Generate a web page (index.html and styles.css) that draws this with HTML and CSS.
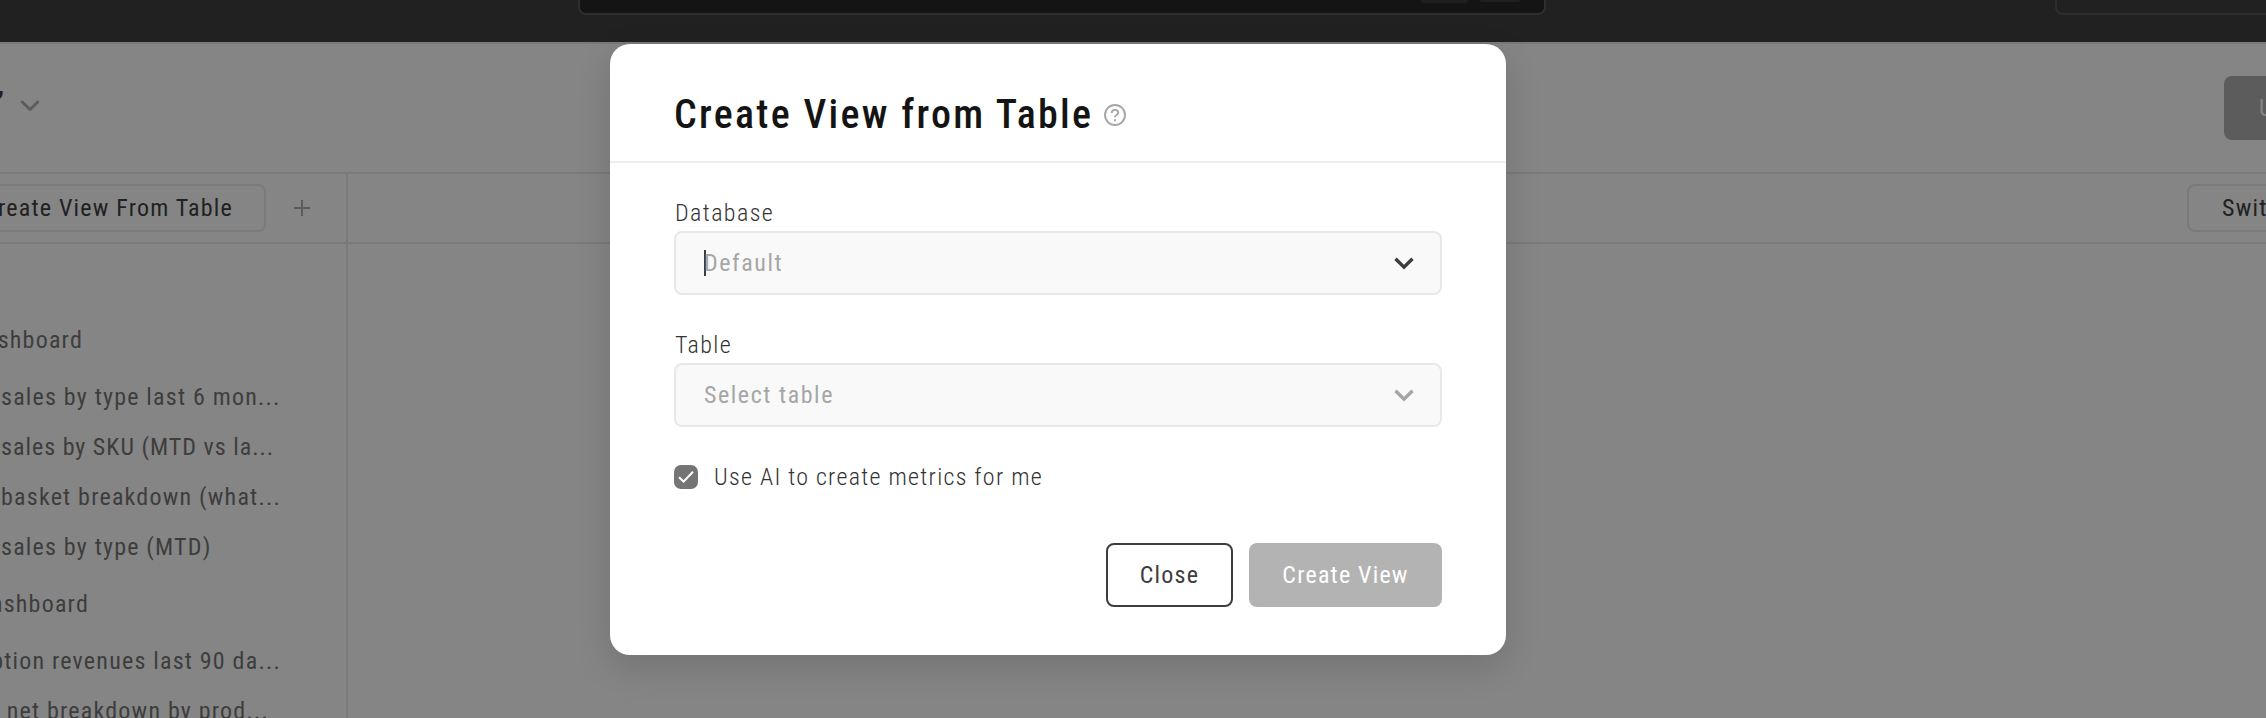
FILE: index.html
```
<!DOCTYPE html>
<html lang="en">
<head>
<meta charset="utf-8">
<title>Create View from Table</title>
<link rel="stylesheet" href="styles.css">
</head>
<body>
<div class="app">
  <div class="topbar">
    <div class="search"><span class="key key-wide"></span><span class="key"></span></div>
    <div class="account"></div>
  </div>
  <header class="header">
    <div class="header-title">
      <span class="title-end">’</span>
      <svg class="title-chevron" width="20" height="12" viewBox="0 0 20 12"><path d="M2.2 2 10 9.6 17.8 2" fill="none" stroke="#5c5c5c" stroke-width="2.8" stroke-linecap="round" stroke-linejoin="round"/></svg>
    </div>
    <div class="update">Update</div>
  </header>
  <div class="main">
    <aside class="sidebar">
      <div class="toolbar">
        <div class="tab">Create View From Table</div>
        <svg class="plus" width="16" height="16" viewBox="0 0 16 16"><path d="M8 0V16M0 8H16" stroke="#5c5c5c" stroke-width="2"/></svg>
      </div>
      <nav class="list">
        <div class="group" style="width:83px">Dashboard</div>
        <div class="item">sales by type last 6 mon...</div>
        <div class="item item-tight">sales by SKU (MTD vs la...</div>
        <div class="item">basket breakdown (what...</div>
        <div class="item">sales by type (MTD)</div>
        <div class="group" style="width:89px">Dashboard</div>
        <div class="item item-end" style="width:281px">ption revenues last 90 da...</div>
        <div class="item item-end" style="width:269px">net breakdown by prod...</div>
      </nav>
    </aside>
    <section class="content">
      <div class="toolbar toolbar-end"><div class="switch">Switch</div></div>
    </section>
  </div>
</div>

<div class="modal">
  <div class="modal-head">
    <h1 class="modal-title">Create View from Table</h1>
    <svg class="help" width="22" height="22" viewBox="0 0 22 22" fill="none" stroke="#a6a6a6" stroke-width="1.9"><circle cx="11" cy="11" r="10"/><path d="M7.8 9V8.8C7.8 7 9.1 5.9 11 5.9S14.2 7 14.2 8.8C14.2 11.1 11 10.9 11 13.2"/><path d="M11 15.2V17.2"/></svg>
  </div>
  <div class="modal-body">
    <label class="label">Database</label>
    <div class="select">
      <span class="caret"></span><span class="placeholder">Default</span>
      <svg class="chevron" width="20" height="13" viewBox="0 0 20 13"><path d="M1.5 1.7 10 10.2 18.5 1.7" fill="none" stroke="#3d3d3d" stroke-width="3.4"/></svg>
    </div>
    <label class="label">Table</label>
    <div class="select">
      <span class="placeholder">Select table</span>
      <svg class="chevron" width="20" height="13" viewBox="0 0 20 13"><path d="M1.5 1.7 10 10.2 18.5 1.7" fill="none" stroke="#a6a6a6" stroke-width="3.4"/></svg>
    </div>
    <div class="check">
      <span class="box"><svg width="24" height="24" viewBox="0 0 24 24"><path d="M5 12.3 9.6 16.6 19 6.8" fill="none" stroke="#fff" stroke-width="2"/></svg></span>
      <span>Use AI to create metrics for me</span>
    </div>
    <div class="actions">
      <div class="btn btn-close">Close</div>
      <div class="btn btn-create">Create View</div>
    </div>
  </div>
</div>
</body>
</html>
```
FILE: styles.css
```
* { box-sizing: border-box; }
body {
  margin: 0;
  width: 2266px;
  height: 718px;
  overflow: hidden;
  position: relative;
  background: #858585;
  font: 400 24px/30px "Roboto Condensed", Roboto, sans-serif;
  letter-spacing: 1.2px;
  white-space: nowrap;
}
.app { display: flex; flex-direction: column; height: 718px; overflow: hidden; }
.topbar {
  flex: none;
  display: flex;
  height: 44px;
  background: #212121;
  border-bottom: 2px solid #7a7a7a;
}
.search {
  flex: none;
  display: flex;
  justify-content: flex-end;
  gap: 12px;
  width: 968px;
  height: 15px;
  margin-left: 578px;
  padding-right: 24px;
  background: #141414;
  border: 2px solid #2e2e2e;
  border-top: 0;
  border-radius: 0 0 8px 8px;
}
.key { width: 40px; height: 2px; background: #1f1f1f; border-radius: 0 0 6px 6px; }
.key-wide { width: 47px; height: 3px; }
.account {
  flex: 1;
  height: 15px;
  margin-left: 509px;
  border: 2px solid #2e2e2e;
  border-top: 0;
  border-right: 0;
  border-radius: 0 0 0 8px;
}
.header {
  flex: none;
  display: flex;
  justify-content: space-between;
  height: 130px;
  padding-top: 32px;
  border-bottom: 2px solid #7a7a7a;
}
.header-title { display: flex; gap: 16px; }
.title-end {
  display: flex;
  justify-content: flex-end;
  width: 4px;
  padding-top: 12px;
  font-size: 30px;
  font-weight: 700;
  letter-spacing: 0;
  color: #212121;
}
.title-chevron { margin-top: 24px; }
.update {
  width: 42px;
  height: 64px;
  padding-left: 35px;
  overflow: hidden;
  background: #5c5c5c;
  border-radius: 8px 0 0 8px;
  color: #858585;
  line-height: 64px;
}
.main { display: flex; flex: 1; min-height: 0; }
.sidebar { width: 348px; border-right: 2px solid #7a7a7a; }
.content { flex: 1; min-width: 0; }
.toolbar {
  display: flex;
  align-items: center;
  height: 70px;
  border-bottom: 2px solid #7a7a7a;
  color: #212121;
}
.toolbar-end { justify-content: flex-end; }
.tab {
  display: flex;
  justify-content: flex-end;
  width: 266px;
  height: 48px;
  padding-right: 31px;
  overflow: hidden;
  border: 2px solid #7a7a7a;
  border-left: 0;
  border-radius: 0 8px 8px 0;
  line-height: 44px;
}
.plus { margin-left: 28px; }
.switch {
  width: 79px;
  height: 48px;
  padding-left: 33px;
  overflow: hidden;
  border: 2px solid #7a7a7a;
  border-right: 0;
  border-radius: 8px 0 0 8px;
  line-height: 44px;
}
.list { padding-top: 64px; color: #3d3d3d; }
.group {
  display: flex;
  justify-content: flex-end;
  height: 64px;
  line-height: 64px;
}
.item { height: 50px; padding-left: 1px; line-height: 50px; }
.item-tight { letter-spacing: 1px; }
.item-end { display: flex; justify-content: flex-end; }
.modal {
  position: absolute;
  left: 610px;
  top: 44px;
  width: 896px;
  height: 611px;
  background: #fff;
  border-radius: 20px;
  box-shadow: 0 12px 36px rgba(0, 0, 0, 0.14);
  color: #333;
}
.modal-head {
  display: flex;
  height: 119px;
  padding: 47px 64px 0;
  gap: 11px;
  border-bottom: 2px solid #eee;
}
.modal-title {
  margin: 0;
  font-size: 40px;
  line-height: 48px;
  font-weight: 500;
  letter-spacing: 2.3px;
  color: #141414;
}
.help { flex: none; margin-top: 13px; }
.modal-body { display: flex; flex-direction: column; padding: 34px 64px 0; }
.label { height: 34px; padding-left: 1px; font-weight: 300; line-height: 32px; letter-spacing: 1.4px; }
.select {
  display: flex;
  align-items: center;
  height: 64px;
  margin-bottom: 34px;
  padding: 0 26px 0 28px;
  background: #f9f9f9;
  border: 2px solid #e8e8e8;
  border-radius: 8px;
  color: #a6a6a6;
}
.placeholder { letter-spacing: 1.55px; }
.caret { width: 2px; height: 26px; background: #3d3d3d; margin-right: -2px; }
.chevron { margin-left: auto; }
.check {
  display: flex;
  align-items: center;
  gap: 16px;
  height: 24px;
  margin-top: 4px;
  font-weight: 300;
  letter-spacing: 1.28px;
}
.box { display: flex; width: 24px; height: 24px; background: #757575; border-radius: 7px; }
.actions { display: flex; justify-content: flex-end; gap: 16px; margin-top: 54px; }
.btn { height: 64px; border-radius: 8px; line-height: 64px; text-align: center; }
.btn-close { width: 127px; border: 2px solid #3d3d3d; line-height: 60px; color: #3d3d3d; }
.btn-create { width: 193px; background: #b3b3b3; color: #fff; }
```
